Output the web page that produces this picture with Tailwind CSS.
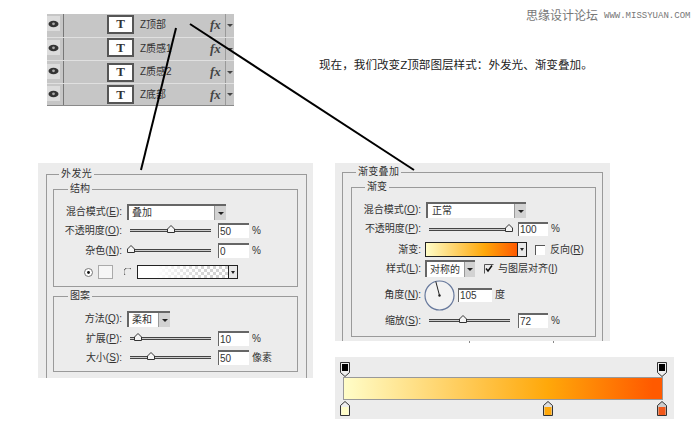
<!DOCTYPE html>
<html lang="zh">
<head>
  <meta charset="UTF-8" />
  <title>图层样式</title>
  <script src="https://cdn.jsdelivr.net/npm/@tailwindcss/browser@4"></script>
</head>
<body class="bg-white">
  <div class="relative w-[700px] h-[439px] overflow-hidden bg-white text-[#333] text-[10px] leading-[14px] font-['Liberation_Sans','Noto_Sans_CJK_SC',sans-serif]">

    <!-- watermark -->
    <div class="absolute left-[526px] top-[8px] flex items-center gap-[6px] text-[#777]">
      <span class="text-[12px] leading-[16px]">思缘设计论坛</span>
      <span class="text-[9px] font-['Liberation_Mono',monospace]">WWW.MISSYUAN.COM</span>
    </div>

    <p class="absolute left-[319px] top-[58px] text-[11.6px] text-[#222]">现在，我们改变Z顶部图层样式：外发光、渐变叠加。</p>

    <!-- layers panel -->
    <div class="absolute left-[47px] top-[14px] w-[187px] h-[92px] bg-[#c6c6c6] flex flex-col border-b border-[#8a8a8a]">
      <div class="h-[23px] flex items-center">
        <div class="w-[13px] h-[15px] -mt-[4px] bg-[#dcdcdc] flex items-center justify-center"><svg width="11" height="8" viewBox="0 0 11 8"><ellipse cx="5.5" cy="4" rx="5" ry="3.2" fill="#333"/><circle cx="5.5" cy="3.8" r="1.4" fill="#aaa"/></svg></div>
        <div class="ml-[3px] h-full border-l border-[#777]"></div>
        <div class="ml-[43px] -mt-[3px] w-[27px] h-[19px] bg-white border-2 border-[#555] flex items-center justify-center font-['Liberation_Serif',serif] font-bold text-[13px] text-[#333]">T</div>
        <span class="ml-[6px] w-[70px] -mt-[1px]">Z顶部</span>
        <span class="w-[15px] -mt-[1px] italic font-bold font-['Liberation_Serif',serif] text-[13px] text-[#444]">fx</span>
        <div class="h-full border-l border-[#999] flex-1 flex items-center justify-center"><div class="w-0 h-0 border-x-[3px] border-x-transparent border-t-[3px] border-t-[#444]"></div></div>
      </div>
      <div class="h-[23px] flex items-center border-t border-[#e0e0e0]">
        <div class="w-[13px] h-[15px] -mt-[3px] bg-[#dcdcdc] flex items-center justify-center"><svg width="11" height="8" viewBox="0 0 11 8"><ellipse cx="5.5" cy="4" rx="5" ry="3.2" fill="#333"/><circle cx="5.5" cy="3.8" r="1.4" fill="#aaa"/></svg></div>
        <div class="ml-[3px] h-full border-l border-[#777]"></div>
        <div class="ml-[43px] -mt-[3px] w-[27px] h-[19px] bg-white border-2 border-[#555] flex items-center justify-center font-['Liberation_Serif',serif] font-bold text-[13px] text-[#333]">T</div>
        <span class="ml-[6px] w-[70px] -mt-[1px]">Z质感1</span>
        <span class="w-[15px] -mt-[1px] italic font-bold font-['Liberation_Serif',serif] text-[13px] text-[#444]">fx</span>
        <div class="h-full border-l border-[#999] flex-1 flex items-center justify-center"><div class="w-0 h-0 border-x-[3px] border-x-transparent border-t-[3px] border-t-[#444]"></div></div>
      </div>
      <div class="h-[23px] flex items-center border-t border-[#e0e0e0]">
        <div class="w-[13px] h-[15px] -mt-[2px] bg-[#dcdcdc] flex items-center justify-center"><svg width="11" height="8" viewBox="0 0 11 8"><ellipse cx="5.5" cy="4" rx="5" ry="3.2" fill="#333"/><circle cx="5.5" cy="3.8" r="1.4" fill="#aaa"/></svg></div>
        <div class="ml-[3px] h-full border-l border-[#777]"></div>
        <div class="ml-[43px] w-[27px] h-[19px] bg-white border-2 border-[#555] flex items-center justify-center font-['Liberation_Serif',serif] font-bold text-[13px] text-[#333]">T</div>
        <span class="ml-[6px] w-[70px]">Z质感2</span>
        <span class="w-[15px] italic font-bold font-['Liberation_Serif',serif] text-[13px] text-[#444]">fx</span>
        <div class="h-full border-l border-[#999] flex-1 flex items-center justify-center"><div class="w-0 h-0 border-x-[3px] border-x-transparent border-t-[3px] border-t-[#444]"></div></div>
      </div>
      <div class="h-[22px] flex items-center border-t border-[#e0e0e0]">
        <div class="w-[13px] h-[15px] -mt-[2px] bg-[#dcdcdc] flex items-center justify-center"><svg width="11" height="8" viewBox="0 0 11 8"><ellipse cx="5.5" cy="4" rx="5" ry="3.2" fill="#333"/><circle cx="5.5" cy="3.8" r="1.4" fill="#aaa"/></svg></div>
        <div class="ml-[3px] h-full border-l border-[#777]"></div>
        <div class="ml-[43px] w-[27px] h-[19px] bg-white border-2 border-[#555] flex items-center justify-center font-['Liberation_Serif',serif] font-bold text-[13px] text-[#333]">T</div>
        <span class="ml-[6px] w-[70px]">Z底部</span>
        <span class="w-[15px] italic font-bold font-['Liberation_Serif',serif] text-[13px] text-[#444]">fx</span>
        <div class="h-full border-l border-[#999] flex-1 flex items-center justify-center"><div class="w-0 h-0 border-x-[3px] border-x-transparent border-t-[3px] border-t-[#444]"></div></div>
      </div>
    </div>

    <!-- outer glow dialog -->
    <div class="absolute left-[38px] top-[163px] w-[275px] h-[215px] overflow-hidden bg-[#ececec] pl-[8px] pr-[6px] pt-[4px]">
      <fieldset class="h-[260px] border border-[#9a9a9a] pl-[6px] pr-[8px]">
        <legend class="ml-[6px] px-[2px] tracking-[0.4px]">外发光</legend>

        <fieldset class="mt-[1px] border border-[#9a9a9a] pt-[8px] pb-[7px]">
          <legend class="ml-[14px] px-[2px]">结构</legend>
          <div class="flex items-center h-[16px]">
            <span class="w-[68px] text-right whitespace-nowrap">混合模式(<u>E</u>):</span>
            <div class="ml-[5px] w-[99px] h-[16px] flex bg-white border-t-2 border-l-2 border-[#666]">
              <span class="flex-1 pl-[3px] leading-[14px]">叠加</span>
              <div class="w-[12px] bg-[#d2d2d2] border-l border-[#999] flex items-center justify-center"><div class="w-0 h-0 border-x-[3px] border-x-transparent border-t-[3px] border-t-[#222]"></div></div>
            </div>
          </div>
          <div class="flex items-center h-[15px] mt-[3px]">
            <span class="w-[68px] text-right whitespace-nowrap">不透明度(<u>O</u>):</span>
            <div class="relative ml-[8px] w-[81px] h-[3px] bg-[#ccc] border-t border-b border-[#444]">
              <svg class="absolute left-[37px] -top-[5px]" width="8" height="8" viewBox="0 0 8 8"><path d="M4 .5 7.5 4v3.5H.5V4z" fill="#f4f4f4" stroke="#333"/></svg>
            </div>
            <div class="ml-[7px] w-[31px] h-[15px] bg-white border-t-2 border-l border-[#666] pl-[1px] leading-[13px]">50</div>
            <span class="ml-[3px]">%</span>
          </div>
          <div class="flex items-center h-[15px] mt-[5px]">
            <span class="w-[68px] text-right whitespace-nowrap">杂色(<u>N</u>):</span>
            <div class="relative ml-[8px] w-[81px] h-[3px] bg-[#ccc] border-t border-b border-[#444]">
              <svg class="absolute -left-[3px] -top-[5px]" width="8" height="8" viewBox="0 0 8 8"><path d="M4 .5 7.5 4v3.5H.5V4z" fill="#f4f4f4" stroke="#333"/></svg>
            </div>
            <div class="ml-[7px] w-[31px] h-[15px] bg-white border-t-2 border-l border-[#666] pl-[1px] leading-[13px]">0</div>
            <span class="ml-[3px]">%</span>
          </div>
          <div class="flex items-center h-[14px] mt-[7px]">
            <svg class="ml-[30px]" width="9" height="9" viewBox="0 0 9 9"><circle cx="4.5" cy="4.5" r="4" fill="#fff" stroke="#777"/><circle cx="4.5" cy="4.5" r="1.4" fill="#111"/></svg>
            <div class="ml-[5px] w-[15px] h-[14px] bg-[#f6f6f6] border border-[#aaa]"></div>
            <svg class="ml-[11px]" width="9" height="9" viewBox="0 0 9 9"><path d="M1 7A4 4 0 0 1 7 1" fill="none" stroke="#555"/></svg>
            <div class="ml-[4px] w-[101px] h-[14px] flex border border-[#222] bg-white">
              <div class="flex-1 bg-[linear-gradient(90deg,#fff_20%,transparent_75%),repeating-conic-gradient(#d4d4d4_0_25%,#fff_0_50%)] bg-size-[100%_100%,6px_6px]"></div>
              <div class="w-[9px] bg-[#e8e8e8] border-l border-[#222] flex items-center justify-center"><div class="w-0 h-0 border-x-[2px] border-x-transparent border-t-[3px] border-t-[#222]"></div></div>
            </div>
          </div>
        </fieldset>

        <fieldset class="mt-[2px] border border-[#9a9a9a] pt-[8px] pb-[6px]">
          <legend class="ml-[14px] px-[2px]">图案</legend>
          <div class="flex items-center h-[16px]">
            <span class="w-[68px] text-right whitespace-nowrap">方法(<u>Q</u>):</span>
            <div class="ml-[5px] w-[43px] h-[16px] flex bg-white border-t-2 border-l-2 border-[#666]">
              <span class="flex-1 pl-[3px] leading-[14px]">柔和</span>
              <div class="w-[12px] bg-[#d2d2d2] border-l border-[#999] flex items-center justify-center"><div class="w-0 h-0 border-x-[3px] border-x-transparent border-t-[3px] border-t-[#222]"></div></div>
            </div>
          </div>
          <div class="flex items-center h-[15px] mt-[4px]">
            <span class="w-[68px] text-right whitespace-nowrap">扩展(<u>P</u>):</span>
            <div class="relative ml-[8px] w-[81px] h-[3px] bg-[#ccc] border-t border-b border-[#444]">
              <svg class="absolute left-[4px] -top-[5px]" width="8" height="8" viewBox="0 0 8 8"><path d="M4 .5 7.5 4v3.5H.5V4z" fill="#f4f4f4" stroke="#333"/></svg>
            </div>
            <div class="ml-[7px] w-[31px] h-[15px] bg-white border-t-2 border-l border-[#666] pl-[1px] leading-[13px]">10</div>
            <span class="ml-[3px]">%</span>
          </div>
          <div class="flex items-center h-[15px] mt-[4px]">
            <span class="w-[68px] text-right whitespace-nowrap">大小(<u>S</u>):</span>
            <div class="relative ml-[8px] w-[81px] h-[3px] bg-[#ccc] border-t border-b border-[#444]">
              <svg class="absolute left-[17px] -top-[5px]" width="8" height="8" viewBox="0 0 8 8"><path d="M4 .5 7.5 4v3.5H.5V4z" fill="#f4f4f4" stroke="#333"/></svg>
            </div>
            <div class="ml-[7px] w-[31px] h-[15px] bg-white border-t-2 border-l border-[#666] pl-[1px] leading-[13px]">50</div>
            <span class="ml-[3px]">像素</span>
          </div>
        </fieldset>
      </fieldset>
    </div>

    <!-- gradient overlay dialog -->
    <div class="absolute left-[335px] top-[163px] w-[275px] h-[178px] overflow-hidden bg-[#ececec] pl-[7px] pr-[7px] pt-[2px]">
      <fieldset class="h-[220px] border border-[#9a9a9a] pl-[8px] pr-[6px]">
        <legend class="ml-[5px] px-[2px] tracking-[0.3px]">渐变叠加</legend>
        <fieldset class="mt-[1px] border border-[#9a9a9a] pt-[8px] pb-[8px]">
          <legend class="ml-[13px] px-[2px]">渐变</legend>
          <div class="flex items-center h-[16px]">
            <span class="w-[69px] text-right whitespace-nowrap">混合模式(<u>O</u>):</span>
            <div class="ml-[5px] w-[100px] h-[16px] flex bg-white border-t-2 border-l-2 border-[#666]">
              <span class="flex-1 pl-[4px] leading-[14px]">正常</span>
              <div class="w-[12px] bg-[#d2d2d2] border-l border-[#999] flex items-center justify-center"><div class="w-0 h-0 border-x-[3px] border-x-transparent border-t-[3px] border-t-[#222]"></div></div>
            </div>
          </div>
          <div class="flex items-center h-[14px] mt-[4px]">
            <span class="w-[69px] text-right whitespace-nowrap">不透明度(<u>P</u>):</span>
            <div class="relative ml-[8px] w-[81px] h-[3px] bg-[#ccc] border-t border-b border-[#444]">
              <svg class="absolute left-[76px] -top-[5px]" width="8" height="8" viewBox="0 0 8 8"><path d="M4 .5 7.5 4v3.5H.5V4z" fill="#f4f4f4" stroke="#333"/></svg>
            </div>
            <div class="ml-[8px] w-[30px] h-[14px] bg-white border-t-2 border-l border-[#666] pl-[1px] leading-[12px]">100</div>
            <span class="ml-[3px]">%</span>
          </div>
          <div class="flex items-center h-[15px] mt-[6px]">
            <span class="w-[69px] text-right whitespace-nowrap">渐变:</span>
            <div class="ml-[4px] w-[102px] h-[15px] flex border border-[#222]">
              <div class="flex-1 bg-[linear-gradient(90deg,#fffdc8,#ffa80a_64%,#ff5a00)]"></div>
              <div class="w-[9px] bg-[#e8e8e8] border-l border-[#222] flex items-center justify-center"><div class="w-0 h-0 border-x-[2px] border-x-transparent border-t-[3px] border-t-[#222]"></div></div>
            </div>
            <div class="ml-[8px] w-[10px] h-[10px] bg-white border-t border-l border-[#555]"></div>
            <span class="ml-[5px] whitespace-nowrap">反向(<u>R</u>)</span>
          </div>
          <div class="flex items-center h-[17px] mt-[3px]">
            <span class="w-[69px] text-right whitespace-nowrap">样式(<u>L</u>):</span>
            <div class="ml-[4px] w-[50px] h-[17px] flex bg-white border-t-2 border-l-2 border-[#666]">
              <span class="flex-1 pl-[3px] leading-[15px] whitespace-nowrap">对称的</span>
              <div class="w-[11px] bg-[#d2d2d2] border-l border-[#999] flex items-center justify-center"><div class="w-0 h-0 border-x-[3px] border-x-transparent border-t-[3px] border-t-[#222]"></div></div>
            </div>
            <svg class="ml-[9px]" width="10" height="10" viewBox="0 0 10 10"><path d="M.5 9.5V.5H9.5" fill="none" stroke="#555"/><path d="M2 4.5 4 7l4-5.5" fill="none" stroke="#111" stroke-width="1.5"/></svg>
            <span class="ml-[4px] whitespace-nowrap">与图层对齐(<u>I</u>)</span>
          </div>
          <div class="flex items-center h-[30px] mt-[3px]">
            <span class="w-[69px] text-right whitespace-nowrap">角度(<u>N</u>):</span>
            <svg class="ml-[3px]" width="31" height="31" viewBox="0 0 31 31"><circle cx="15.5" cy="15.5" r="14.5" fill="#f2f2f2" stroke="#66789c" stroke-width="1.2"/><path d="M15.5 15.5 11.8 1.5" stroke="#222"/><circle cx="15.5" cy="15.5" r="1.2" fill="#222"/></svg>
            <div class="ml-[3px] w-[34px] h-[14px] bg-white border-t-2 border-l border-[#666] pl-[1px] leading-[12px]">105</div>
            <span class="ml-[3px]">度</span>
          </div>
          <div class="flex items-center h-[15px] mt-[3px]">
            <span class="w-[69px] text-right whitespace-nowrap">缩放(<u>S</u>):</span>
            <div class="relative ml-[8px] w-[81px] h-[3px] bg-[#ccc] border-t border-b border-[#444]">
              <svg class="absolute left-[30px] -top-[5px]" width="8" height="8" viewBox="0 0 8 8"><path d="M4 .5 7.5 4v3.5H.5V4z" fill="#f4f4f4" stroke="#333"/></svg>
            </div>
            <div class="ml-[8px] w-[30px] h-[15px] bg-white border-t-2 border-l border-[#666] pl-[1px] leading-[13px]">72</div>
            <span class="ml-[3px]">%</span>
          </div>
        </fieldset>
      </fieldset>
    </div>
    <div class="absolute left-[469px] top-[341px] w-px h-[2px] bg-[#888]"></div>
    <div class="absolute left-[553px] top-[341px] w-px h-[2px] bg-[#888]"></div>

    <!-- gradient editor strip -->
    <div class="absolute left-[335px] top-[357px] w-[339px] h-[62px] bg-[#ececec] pl-[5px] pr-[7px] pt-[5px]">
      <div class="flex justify-between h-[15px]">
        <svg width="10" height="15" viewBox="0 0 10 15"><path d="M.5.5h9v10L5 14.5.5 10.5z" fill="#eee" stroke="#333"/><rect x="2" y="2" width="6" height="7" fill="#000"/></svg>
        <svg width="10" height="15" viewBox="0 0 10 15"><path d="M.5.5h9v10L5 14.5.5 10.5z" fill="#eee" stroke="#333"/><rect x="2" y="2" width="6" height="7" fill="#000"/></svg>
      </div>
      <div class="ml-[3px] mr-[4px] h-[23px] border border-[#999] bg-[linear-gradient(90deg,#fffdc8,#ffa80a_64%,#ff5a00_97%)]"></div>
      <div class="relative h-[15px] mt-[1px]">
        <svg class="absolute left-0 top-0" width="10" height="15" viewBox="0 0 10 15"><path d="M.5 14.5v-10L5 .5l4.5 4v10z" fill="#eee" stroke="#333"/><rect x="1.5" y="6" width="7" height="8" fill="#fffdc8"/></svg>
        <svg class="absolute left-[203px] top-0" width="10" height="15" viewBox="0 0 10 15"><path d="M.5 14.5v-10L5 .5l4.5 4v10z" fill="#ddd" stroke="#333"/><rect x="1.5" y="6" width="7" height="8" fill="#ffa80a"/></svg>
        <svg class="absolute right-0 top-0" width="10" height="15" viewBox="0 0 10 15"><path d="M.5 14.5v-10L5 .5l4.5 4v10z" fill="#ccc" stroke="#333"/><rect x="1.5" y="6" width="7" height="8" fill="#f2581a"/></svg>
      </div>
    </div>

    <!-- callout lines -->
    <svg class="absolute inset-0 pointer-events-none" width="700" height="439" viewBox="0 0 700 439">
      <path d="M176 28 141 170" stroke="#000" stroke-width="2" fill="none"/>
      <path d="M190 24 414 170" stroke="#000" stroke-width="2" fill="none"/>
    </svg>
  </div>
</body>
</html>
